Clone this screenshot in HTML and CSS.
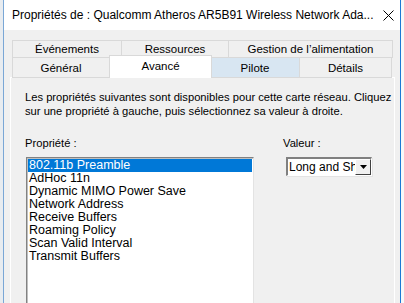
FILE: index.html
```html
<!DOCTYPE html>
<html>
<head>
    <title>Propriétés</title>
    <link rel="stylesheet" href="styles.css">
</head>
<body>
    <div class="screen">
        <div class="behind"></div>
        <div class="window">
            <div class="titlebar">
                <span class="title">Propriétés de : Qualcomm Atheros AR5B91 Wireless Network Ada...</span>
                <svg class="close" width="11" height="11" viewBox="0 0 11 11">
                    <path d="M0.5 0.5 L10.5 10.5 M10.5 0.5 L0.5 10.5" stroke="#000" stroke-width="1" fill="none"/>
                </svg>
            </div>
            <div class="dialog">
                <div class="tab-row back">
                    <div class="tab t-events">Événements</div>
                    <div class="tab t-res">Ressources</div>
                    <div class="tab t-power">Gestion de l’alimentation</div>
                </div>
                <div class="tab-row front">
                    <div class="tab t-gen">Général</div>
                    <div class="tab t-adv selected">Avancé</div>
                    <div class="tab t-drv hover">Pilote</div>
                    <div class="tab t-det">Détails</div>
                </div>
                <div class="panel">
                    <p class="intro">Les propriétés suivantes sont disponibles pour cette carte réseau. Cliquez<br>sur une propriété à gauche, puis sélectionnez sa valeur à droite.</p>
                    <div class="fields">
                        <div class="prop-col">
                            <div class="label">Propriété :</div>
                            <div class="listbox">
                                <div class="item active">802.11b Preamble</div>
                                <div class="item">AdHoc 11n</div>
                                <div class="item">Dynamic MIMO Power Save</div>
                                <div class="item">Network Address</div>
                                <div class="item">Receive Buffers</div>
                                <div class="item">Roaming Policy</div>
                                <div class="item">Scan Valid Interval</div>
                                <div class="item">Transmit Buffers</div>
                            </div>
                        </div>
                        <div class="value-col">
                            <div class="label">Valeur :</div>
                            <div class="combo">
                                <div class="combo-text">Long and Sho</div>
                                <div class="combo-btn">
                                    <svg width="7" height="4" viewBox="0 0 7 4"><path d="M0 0 H7 L3.5 4 Z" fill="#000"/></svg>
                                </div>
                            </div>
                        </div>
                    </div>
                </div>
            </div>
        </div>
        <div class="beside"></div>
    </div>
</body>
</html>
```

FILE: styles.css
```css
body {
    margin: 0;
    font-family: "Liberation Sans", Arial, sans-serif;
    background: #fff;
    overflow: hidden;
}

.screen {
    display: flex;
    height: 303px;
    overflow: hidden;
}

.behind {
    width: 3px;
    background: #e8ecf0;
}

.window {
    width: 396px;
    border-left: 1px solid #7aa7d6;
    border-right: 1px solid #1c78d4;
    display: flex;
    flex-direction: column;
    background: #f0f0f0;
}

.beside {
    flex: 1;
    background: #f8f8f8;
}

.titlebar {
    height: 30px;
    background: #fff;
    display: flex;
    align-items: center;
    padding-left: 8px;
    flex-shrink: 0;
}

.title {
    font-size: 12px;
    color: #000;
    white-space: nowrap;
}

.close {
    margin-left: auto;
    margin-right: 6px;
}

.dialog {
    padding: 10px 5px 0 6px;
    flex: 1;
    display: flex;
    flex-direction: column;
}

.tab-row {
    display: flex;
    padding-left: 2px;
    font-size: 11.5px;
}

.tab {
    box-sizing: border-box;
    border: 1px solid #d9d9d9;
    border-right: none;
    display: flex;
    align-items: center;
    justify-content: center;
    color: #000;
}

.tab-row .tab:last-child {
    border-right: 1px solid #d9d9d9;
}

.back .tab {
    height: 18px;
}

.front {
    margin-top: -1px;
    position: relative;
    z-index: 1;
}

.front .tab {
    height: 21px;
}

.t-events { width: 109px; }
.t-res { width: 107px; }
.t-power { width: 165px; }
.t-gen { width: 97px; }
.t-adv { width: 103px; }
.t-drv { width: 88px; }
.t-det { width: 93px; }

.tab.selected {
    background: #fff;
    height: 23px;
    margin-top: -2px;
    border-bottom: none;
    align-items: flex-start;
    padding-top: 4px;
    border-right: 1px solid #d9d9d9;
    margin-right: -1px;
    position: relative;
    z-index: 2;
}

.tab.hover {
    background: #d8e6f2;
    border-left: none;
}

.panel {
    flex: 1;
    margin-top: -1px;
    border: 1px solid #fff;
    border-bottom: none;
    padding: 12px 10px 0 14px;
    font-size: 11.2px;
}

.intro {
    margin: 0;
    line-height: 14px;
    color: #000;
    white-space: nowrap;
}

.fields {
    display: flex;
    margin-top: 19px;
}

.prop-col {
    width: 229px;
}

.label {
    height: 20px;
    line-height: 13px;
}

.listbox {
    height: 200px;
    margin-left: 1px;
    background: #fff;
    border-top: 1px solid #828282;
    border-left: 1px solid #828282;
    border-right: 1px solid #e3e3e3;
    box-shadow: inset 1px 1px 0 #bfbfbf;
    padding: 1px 1px 0 1px;
    font-size: 12.5px;
}

.item {
    height: 13px;
    line-height: 13px;
    padding-left: 1px;
    white-space: nowrap;
}

.item.active {
    background: #0078d7;
    color: #fff;
}

.value-col {
    margin-left: 29px;
}

.combo {
    margin-left: 3px;
    width: 86px;
    height: 19px;
    box-sizing: border-box;
    display: flex;
    background: #fff;
    border-top: 2px solid #808080;
    border-left: 2px solid #808080;
    border-bottom: 1px solid #fff;
    border-right: 1px solid #fff;
    box-shadow: 1px 1px 0 #e3e3e3;
}

.combo-text {
    flex: 1;
    overflow: hidden;
    white-space: nowrap;
    font-size: 12px;
    line-height: 16px;
    padding-left: 1px;
}

.combo-btn {
    width: 16px;
    box-sizing: border-box;
    background: #f0f0f0;
    border-top: 1px solid #fff;
    border-left: 1px solid #fff;
    border-right: 1px solid #404040;
    border-bottom: 1px solid #404040;
    display: flex;
    align-items: center;
    justify-content: center;
}
```
